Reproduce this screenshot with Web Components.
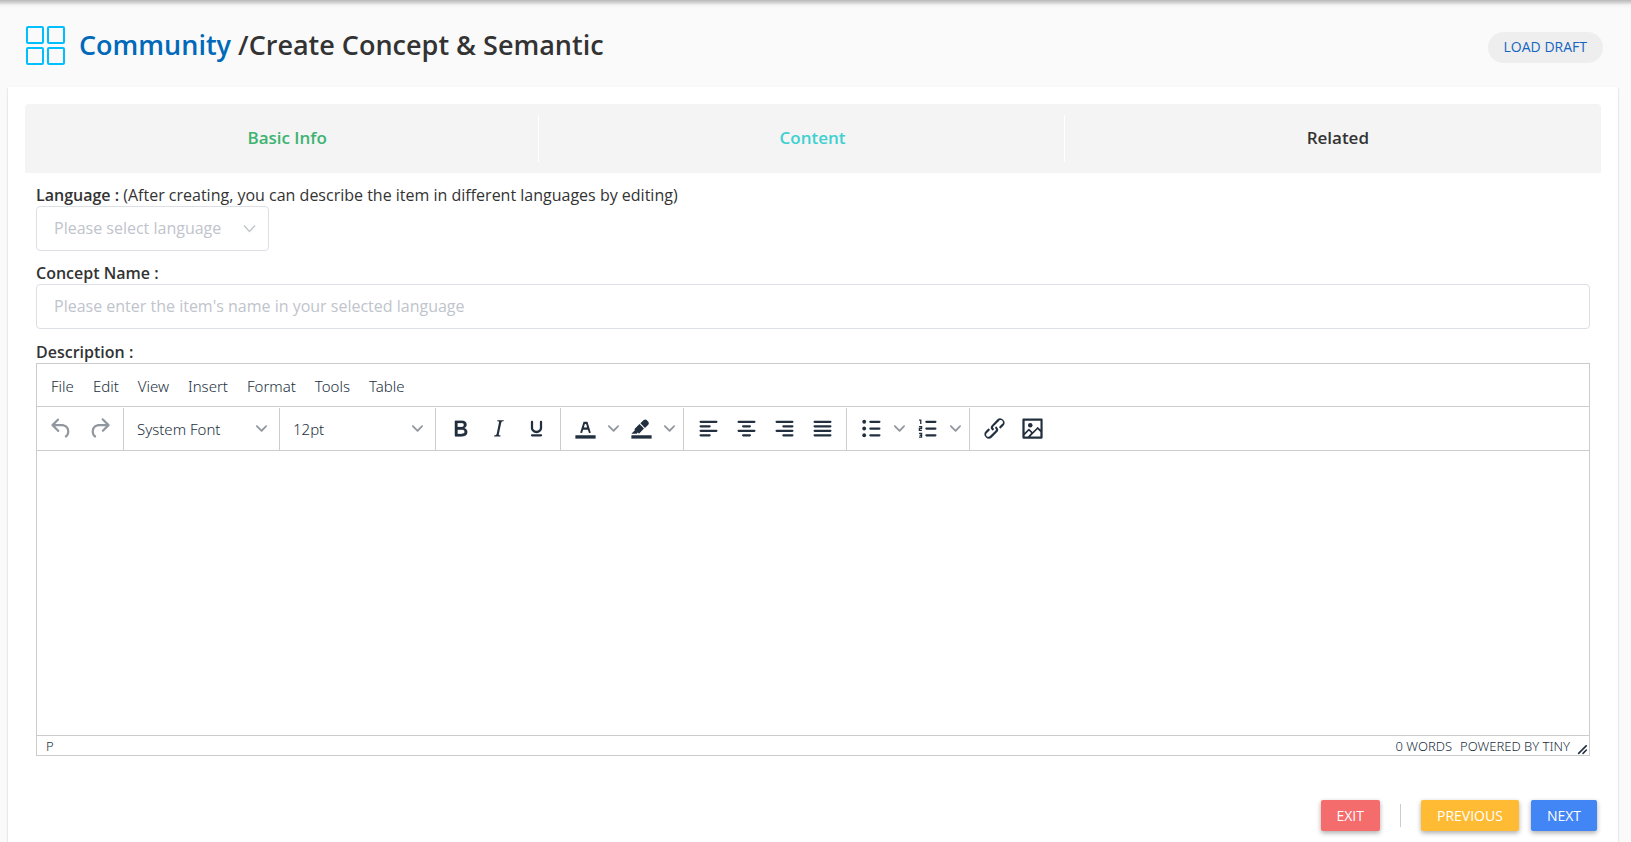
<!DOCTYPE html>
<html lang="en">
<head>
<meta charset="utf-8">
<title>Create Concept &amp; Semantic</title>
<style>
html,body{margin:0;background:#fafafa;color:#333;font-family:"Open Sans",sans-serif;font-size:16px}
</style>
</head>
<body>
<concept-page></concept-page>
<script>
const define=(name,html)=>customElements.define(name,class extends HTMLElement{
  connectedCallback(){
    if(this.shadowRoot)return;
    const root=this.attachShadow({mode:'open'});
    const t=document.createElement('template');
    t.innerHTML=typeof html==='function'?html(this):html;
    root.append(t.content.cloneNode(true));
  }
});

const lines=d=>`<path d="${d}" fill="none" stroke="currentColor" stroke-width="2" stroke-linecap="round"/>`;
const icons={
  undo:'<path d="M6.4 8H12c3.7 0 6.2 2 6.8 5.1.6 2.7-.4 5.6-2.3 6.8a1 1 0 0 1-1-1.8c1.1-.6 1.8-2.7 1.4-4.6-.5-2.1-2.1-3.5-4.9-3.5H6.4l3.3 3.3a1 1 0 1 1-1.4 1.4l-5-5a1 1 0 0 1 0-1.4l5-5a1 1 0 0 1 1.4 1.4L6.4 8z"/>',
  redo:'<path d="M17.6 10H12c-2.8 0-4.4 1.4-4.9 3.5-.4 2 .3 4 1.4 4.6a1 1 0 1 1-1 1.8c-2-1.2-2.9-4.1-2.3-6.8.6-3 3-5.1 6.8-5.1h5.6l-3.3-3.3a1 1 0 1 1 1.4-1.4l5 5a1 1 0 0 1 0 1.4l-5 5a1 1 0 0 1-1.4-1.4l3.3-3.3z"/>',
  bold:'<path fill-rule="evenodd" d="M7.8 19c-.3 0-.5 0-.6-.2l-.2-.5V5.7c0-.2 0-.4.2-.5l.6-.2h5c1.5 0 2.7.3 3.5 1 .7.6 1.1 1.4 1.1 2.5a3 3 0 0 1-.6 1.9c-.4.6-1 1-1.6 1.2.4.1.9.3 1.3.6s.8.7 1 1.2c.4.4.5 1 .5 1.6 0 1.3-.4 2.3-1.3 3-.8.7-2.1 1-3.8 1H7.8zm5-8.3c.6 0 1.2-.1 1.6-.5.4-.3.6-.7.6-1.3 0-1.1-.8-1.7-2.3-1.7H9.3v3.5h3.4zm.5 6c.7 0 1.3-.1 1.7-.4.4-.4.6-.9.6-1.5s-.2-1-.7-1.4c-.4-.3-1-.4-2-.4H9.4v3.8h4z" stroke="currentColor" stroke-width=".2"/>',
  italic:'<path d="M16.7 4.7l-.1.9h-.3c-.6 0-1 0-1.4.3-.3.3-.4.6-.5 1.1l-2.1 9.8v.6c0 .5.4.8 1.4.8h.2l-.2.8H8l.2-.8h.2c1.1 0 1.8-.5 2-1.5l2-9.8.1-.5c0-.6-.4-.8-1.4-.8h-.3l.2-.9h5.8z"/>',
  underline:'<path d="M16 5c.6 0 1 .4 1 1v5.5a4 4 0 0 1-.4 1.8l-1 1.4a5.3 5.3 0 0 1-5.5 1 5 5 0 0 1-1.6-1c-.5-.4-.8-.9-1.1-1.4a4 4 0 0 1-.4-1.8V6c0-.6.4-1 1-1s1 .4 1 1v5.5c0 .3 0 .6.2 1l.6.7a3.3 3.3 0 0 0 2.2.8 3.4 3.4 0 0 0 2.2-.8c.3-.2.4-.5.6-.8l.2-.9V6c0-.6.4-1 1-1zM8 17h8c.6 0 1 .4 1 1s-.4 1-1 1H8a1 1 0 0 1 0-2z"/>',
  color:'<path d="M3 18h18v3H3z"/><path d="M8.7 16h-.8a.5.5 0 0 1-.5-.6l2.7-9c.1-.3.3-.4.5-.4h2.8c.2 0 .4.1.5.4l2.7 9a.5.5 0 0 1-.5.6h-.8a.5.5 0 0 1-.4-.4l-.7-2.2c0-.3-.3-.4-.5-.4h-3.4c-.2 0-.4.1-.5.4l-.7 2.2c0 .3-.2.4-.4.4zm2.6-7.6l-.6 2a.5.5 0 0 0 .5.6h1.6a.5.5 0 0 0 .5-.6l-.6-2c0-.3-.3-.4-.5-.4h-.4c-.2 0-.4.1-.5.4z"/>',
  highlight:'<path d="M3 18h18v3H3z"/><path d="M7.7 16.7H3l3.3-3.3-.7-.8L10.2 8l4 4.1-4 4.2c-.2.2-.6.2-.8 0l-.6-.7-1.1 1.1zm5-7.5L11 7.4l3-2.9a2 2 0 0 1 2.6 0L18 6c.7.7.7 2 0 2.7l-2.9 2.9-1.8-1.8-.5-.6"/>',
  left:lines('M5 6h14M5 10h8M5 14h14M5 18h8'),
  center:lines('M5 6h14M9 10h6M5 14h14M9 18h6'),
  right:lines('M5 6h14M11 10h8M5 14h14M11 18h8'),
  justify:lines('M5 6h14M5 10h14M5 14h14M5 18h14'),
  bullets:lines('M11 6h8M11 12h8M11 18h8')+'<circle cx="5.5" cy="6" r="1.7"/><circle cx="5.5" cy="12" r="1.7"/><circle cx="5.5" cy="18" r="1.7"/>',
  numbers:lines('M11 6h8M11 12h8M11 18h8')+'<path d="M4.5 4.5H6v3.5M4.5 10.3h2.2v1.6H4.8v1.8H7M4.5 16.3h2.2v3.4H4.5M5 18h1.7" fill="none" stroke="currentColor" stroke-width="1.2"/>',
  link:'<path d="M6.2 12.3a1 1 0 0 1 1.4 1.4l-2.1 2a2 2 0 1 0 2.7 2.8l4.8-4.8a1 1 0 0 0 0-1.4 1 1 0 1 1 1.4-1.3 2.9 2.9 0 0 1 0 4L9.6 20a3.9 3.9 0 0 1-5.5-5.5l2-2zm11.6-.6a1 1 0 0 1-1.4-1.4l2-2a2 2 0 1 0-2.6-2.8L11 10.3a1 1 0 0 0 0 1.4A1 1 0 1 1 9.6 13a2.9 2.9 0 0 1 0-4L14.4 4a3.9 3.9 0 0 1 5.5 5.5l-2 2z"/>',
  image:'<path fill-rule="evenodd" d="M5 15.7l3.3-3.2c.3-.3.7-.3 1 0L12 15l4.1-4c.3-.4.8-.4 1 0l2 1.9V5H5v10.7zM5 18V19h3l2.8-2.9-2-2L5 17.9zm14-3l-2.5-2.4-6.4 6.5H19v-4zM4 3h16c.6 0 1 .4 1 1v16c0 .6-.4 1-1 1H4a1 1 0 0 1-1-1V4c0-.6.4-1 1-1z"/><circle cx="10" cy="9" r="2"/>'
};
const chevron='<svg class="chev" viewBox="0 0 10 10" aria-hidden="true"><path d="M8.7 2.2c.3-.3.8-.3 1 0 .4.4.4.9 0 1.2L5.7 7.8c-.3.3-.9.3-1.2 0L.2 3.4a.8.8 0 0 1 0-1.2c.3-.3.8-.3 1.1 0L5 6l3.7-3.8z" fill="currentColor"/></svg>';

define('page-header',`
<style>
:host{display:flex;align-items:center;height:87px;box-sizing:border-box;padding:0 28px 0 25px;background:linear-gradient(#b8b8b8,#d8d8d8 3px,#f2f2f2 5px,#fafafa 8px)}
svg{width:41px;height:41px;margin-top:3px}
h1{flex:1;margin:0 0 0 13px;font-size:27px;line-height:36px;font-weight:600;padding-top:2px}
a{color:#0069b9;text-decoration:none}
button{margin-top:7px;height:31px;border:0;border-radius:16px;padding:0 16px;background:#eee;color:#1464c0;font:14px/30px "Open Sans",sans-serif}
</style>
<svg viewBox="0 0 41 41" fill="none" stroke="#00bfff" stroke-width="2" aria-hidden="true"><rect x="2" y="2" width="16" height="16" rx="1"/><rect x="23" y="2" width="16" height="16" rx="1"/><rect x="2" y="23" width="16" height="16" rx="1"/><rect x="23" y="23" width="16" height="16" rx="1"/></svg>
<h1><a href="#community">Community</a> /Create Concept &amp; Semantic</h1>
<button type="button">LOAD DRAFT</button>`);

define('step-tabs',`
<style>
:host{display:grid;grid-template-columns:repeat(3,1fr);height:69px;background:#f4f4f4;border-radius:4px 4px 0 0;align-items:center}
::slotted(step-tab:last-child){--line:transparent}
</style><slot></slot>`);
define('step-tab',`
<style>
:host{display:block;padding:0 11px}
a{display:block;height:47px;line-height:46px;border-right:1px solid var(--line,#fff);text-align:center;font-size:17px;font-weight:600;color:inherit;text-decoration:none}
</style><a href="#step"><slot></slot></a>`);

const fieldCss=`
:host{display:block;margin-bottom:11px}
label{display:block;line-height:22px;font-size:16px;color:#333}
b{font-weight:600}
input,select{display:block;box-sizing:border-box;height:45px;border:1px solid #dcdfe6;border-radius:4px;background:#fff;padding:0 17px 2px;font:16px "Open Sans",sans-serif;color:#c0c4cc;outline:0;margin:0;appearance:none}
input{width:100%}
input::placeholder{color:#c0c4cc;opacity:1}`;
define('select-field',`
<style>${fieldCss}
.box{position:relative;width:233px}
select{width:100%}
svg{position:absolute;right:13px;top:17px;width:13px;height:12px}
</style>
<label for="language"><b>Language :</b> <slot></slot></label>
<div class="box"><select id="language"><option>Please select language</option></select>
<svg viewBox="0 0 13 12" fill="none" stroke="#c0c4cc" stroke-width="1.3" aria-hidden="true"><path d="M1 2.5l5.5 6 5.5-6"/></svg></div>`);
define('text-field',el=>`
<style>${fieldCss}</style>
<label for="name"><b><slot></slot></b></label>
<input id="name" type="text" placeholder="${el.getAttribute('hint')}">`);

define('tool-group',`
<style>:host{display:flex;align-items:center;height:42px;padding:0 5px;border-right:1px solid #ccc}
:host(:last-child){border-right:0}</style><slot></slot>`);
define('tool-button',el=>`
<style>
:host{display:flex;color:#222f3e}
:host([disabled]){color:#222f3e80}
button{display:flex;align-items:center;justify-content:center;width:38px;height:38px;padding:0 0 2px;border:0;background:none;color:inherit}
.more{width:18px;padding:0 0 1px}
svg{width:27px;height:27px;fill:currentColor;flex:none}
.chev{width:11px;height:11px;color:#222f3e80}
</style>
<button type="button" aria-label="${el.getAttribute('icon')}"><svg viewBox="0 0 24 24" aria-hidden="true">${icons[el.getAttribute('icon')]}</svg></button>
${el.hasAttribute('split')?`<button type="button" class="more" aria-label="${el.getAttribute('icon')} options">${chevron}</button>`:''}`);
define('tool-select',el=>`
<style>
:host{display:block;position:relative;width:145px}
select{appearance:none;display:block;width:100%;height:38px;border:0;padding:0 8px;margin:0;background:none;color:#222f3e;font:300 15px "Noto Sans",sans-serif}
.chev{position:absolute;right:7px;top:13px;width:11px;height:11px;color:#222f3e80;pointer-events:none}
</style>
<select aria-label="${el.getAttribute('name')}"><option>${el.getAttribute('value')}</option></select>${chevron}`);

define('rich-editor',`
<style>
:host{display:block;border:1px solid #ccc;color:#222f3e;font-family:"Noto Sans",sans-serif}
.menu{display:flex;gap:19px;height:43px;align-items:center;padding:0 14px;border-bottom:1px solid #ccc;box-sizing:border-box}
.menu button{border:0;background:none;padding:1px 0 0;color:inherit;font:300 15px/22px "Noto Sans",sans-serif}
.bar{display:flex;align-items:flex-end;height:44px;border-bottom:1px solid #ccc;box-sizing:border-box}
.area{height:284px;outline:0}
.status{display:flex;align-items:center;height:20px;box-sizing:border-box;border-top:1px solid #ccc;padding:0 1px 0 9px;font-size:13px;font-weight:300;color:#222f3e;line-height:18px}
.status span:nth-child(2){margin-left:auto;margin-right:8px}
.status a{color:inherit;text-decoration:none}
.status svg{width:11px;height:11px;margin-left:7px;align-self:flex-end;fill:#222f3e}
</style>
<div class="menu"><button type="button">File</button><button type="button">Edit</button><button type="button">View</button><button type="button">Insert</button><button type="button">Format</button><button type="button">Tools</button><button type="button">Table</button></div>
<div class="bar">
<tool-group><tool-button icon="undo" disabled></tool-button><tool-button icon="redo" disabled></tool-button></tool-group>
<tool-group><tool-select name="Font" value="System Font"></tool-select></tool-group>
<tool-group><tool-select name="Font size" value="12pt"></tool-select></tool-group>
<tool-group><tool-button icon="bold"></tool-button><tool-button icon="italic"></tool-button><tool-button icon="underline"></tool-button></tool-group>
<tool-group><tool-button icon="color" split></tool-button><tool-button icon="highlight" split></tool-button></tool-group>
<tool-group><tool-button icon="left"></tool-button><tool-button icon="center"></tool-button><tool-button icon="right"></tool-button><tool-button icon="justify"></tool-button></tool-group>
<tool-group><tool-button icon="bullets" split></tool-button><tool-button icon="numbers" split></tool-button></tool-group>
<tool-group><tool-button icon="link"></tool-button><tool-button icon="image"></tool-button></tool-group>
</div>
<div class="area" contenteditable="true" role="textbox" aria-label="Description"></div>
<div class="status"><span>P</span><span>0 WORDS</span><a href="#tiny">POWERED BY TINY</a><svg viewBox="0 0 10 10" aria-hidden="true"><path d="M8.1 1.1A.5.5 0 1 1 9 2l-7 7A.5.5 0 1 1 1 8l7-7zM8.1 5.1A.5.5 0 1 1 9 6l-3 3A.5.5 0 1 1 5 8l3-3z"/></svg></div>`);

define('action-button',`
<style>:host{display:block}
button{display:block;height:31px;border:0;border-radius:2px;padding:0 16px;color:#fff;background:var(--tone);font:14px/30px "Open Sans",sans-serif;box-shadow:0 2px 5px #0005}
</style><button type="button"><slot></slot></button>`);

define('concept-page',`
<style>
:host{display:flex;flex-direction:column;min-height:100vh}
main{flex:1;margin:0 13px 0 8px;background:#fff;box-shadow:0 1px 2px #0003;padding:17px 17px 11px;box-sizing:border-box}
.form{padding:11px 11px 0}
.label{line-height:22px;padding-top:1px;font-weight:600}
.actions{display:flex;justify-content:flex-end;align-items:center;padding-right:4px;margin-top:44px}
.rule{width:1px;height:23px;background:#ccc;margin:0 20px}
.next{margin-left:12px}
</style>
<page-header></page-header>
<main>
<step-tabs><step-tab style="color:#3cb371">Basic Info</step-tab><step-tab style="color:#40d0d0">Content</step-tab><step-tab>Related</step-tab></step-tabs>
<div class="form">
<select-field>(After creating, you can describe the item in different languages by editing)</select-field>
<text-field hint="Please enter the item's name in your selected language">Concept Name :</text-field>
<div class="label">Description :</div>
<rich-editor></rich-editor>
</div>
<div class="actions">
<action-button style="--tone:#f56c6c">EXIT</action-button><span class="rule"></span>
<action-button style="--tone:#ffbb33">PREVIOUS</action-button>
<action-button class="next" style="--tone:#4285f4">NEXT</action-button>
</div>
</main>`);
</script>
</body>
</html>
